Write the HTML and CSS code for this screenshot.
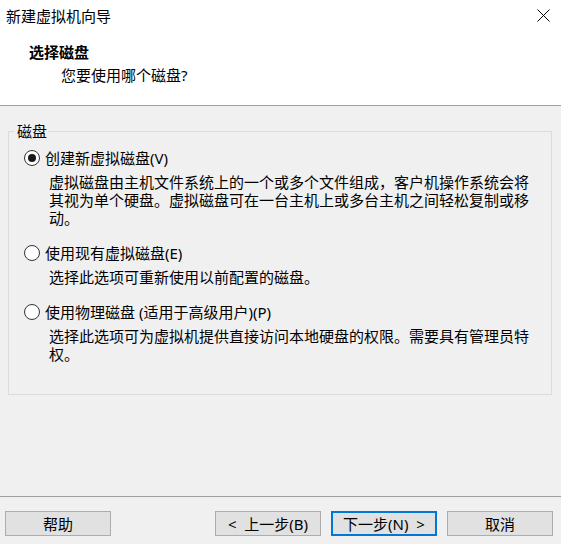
FILE: index.html
```html
<!DOCTYPE html>
<html lang="zh-CN">
<head>
<meta charset="utf-8">
<title>新建虚拟机向导</title>
<link rel="stylesheet" href="styles.css">
</head>
<body>
<div class="window">
  <div class="header">
    <div class="titlebar">
      <span class="title">新建虚拟机向导</span>
      <svg class="close" width="13" height="13" viewBox="0 0 13 13" aria-label="关闭">
        <path d="M0.5 0.5 L12.5 12.5 M12.5 0.5 L0.5 12.5" stroke="#000" stroke-width="1" fill="none"/>
      </svg>
    </div>
    <div class="heading">选择磁盘</div>
    <div class="subheading">您要使用哪个磁盘?</div>
  </div>
  <div class="content">
    <fieldset class="group">
      <legend class="group-title">磁盘</legend>
      <div class="option">
        <span class="radio checked"><span class="dot"></span></span>
        <span class="label">创建新虚拟磁盘(V)</span>
      </div>
      <p class="desc">虚拟磁盘由主机文件系统上的一个或多个文件组成，客户机操作系统会将其视为单个硬盘。虚拟磁盘可在一台主机上或多台主机之间轻松复制或移动。</p>
      <div class="option">
        <span class="radio"></span>
        <span class="label">使用现有虚拟磁盘(E)</span>
      </div>
      <p class="desc">选择此选项可重新使用以前配置的磁盘。</p>
      <div class="option">
        <span class="radio"></span>
        <span class="label">使用物理磁盘 (适用于高级用户)(P)</span>
      </div>
      <p class="desc last">选择此选项可为虚拟机提供直接访问本地硬盘的权限。需要具有管理员特权。</p>
    </fieldset>
  </div>
  <div class="footer">
    <button class="btn">帮助</button>
    <span class="spacer"></span>
    <button class="btn">&lt;&nbsp; 上一步(B)</button>
    <button class="btn default">下一步(N)&nbsp; &gt;</button>
    <button class="btn">取消</button>
  </div>
</div>
</body>
</html>
```
FILE: styles.css
```css
* {
  box-sizing: border-box;
}

html, body {
  margin: 0;
  padding: 0;
}

body {
  font-family: "Noto Sans", "Noto Sans CJK SC", sans-serif;
  font-size: 15px;
  line-height: 18px;
  color: #000;
  background: #f0f0f0;
}

.window {
  width: 561px;
  height: 544px;
  display: flex;
  flex-direction: column;
}

.header {
  background: #fff;
  height: 106px;
  border-bottom: 1px solid #a0a0a0;
}

.titlebar {
  height: 31px;
  display: flex;
  align-items: center;
  justify-content: space-between;
  padding: 0 11px 0 6px;
}

.close {
  display: block;
}

.heading {
  font-weight: bold;
  margin: 12px 0 0 29px;
}

.subheading {
  margin: 5px 0 0 61px;
}

.content {
  flex: 1;
  padding: 16px 9px 0 8px;
}

.group {
  margin: 0;
  padding: 9px 0 31px 0;
  border: 1px solid #dcdcdc;
  min-width: 0;
}

.group-title {
  margin-left: 5px;
  padding: 0 1px 0 3px;
  line-height: 18px;
}

.option {
  display: flex;
  align-items: center;
  gap: 5px;
  margin-left: 15px;
  height: 18px;
}

.radio {
  width: 16px;
  height: 16px;
  border: 1px solid #333;
  border-radius: 50%;
  background: #fff;
  display: flex;
  align-items: center;
  justify-content: center;
  flex: none;
}

.radio .dot {
  width: 8px;
  height: 8px;
  border-radius: 50%;
  background: #1a1a1a;
}

.desc {
  margin: 6px 0 17px 40px;
  width: 485px;
}

.desc.last {
  margin-bottom: 0;
}

.footer {
  display: flex;
  gap: 10px;
  border-top: 1px solid #a0a0a0;
  padding: 14px 8px 8px 5px;
}

.spacer {
  flex: 1;
}

.btn {
  width: 106px;
  height: 25px;
  border: 1px solid #adadad;
  background: #e1e1e1;
  font: inherit;
  color: #000;
  padding: 0;
  margin: 0;
}

.btn.default {
  border: 2px solid #0078d7;
}
```
